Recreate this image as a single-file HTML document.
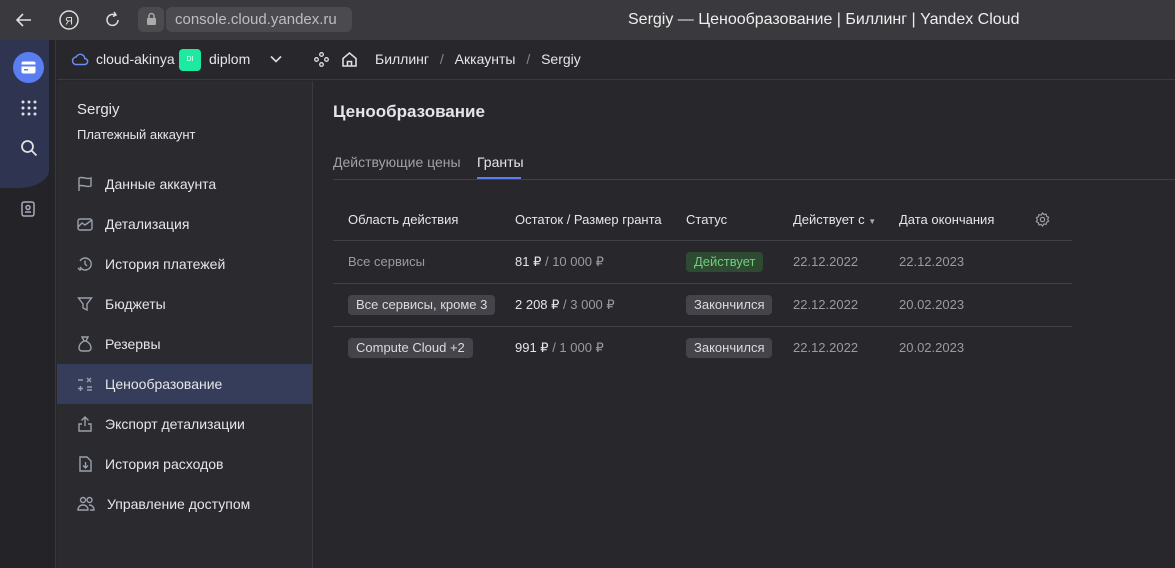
<!DOCTYPE html>
<html><head><meta charset="utf-8"><style>
*{margin:0;padding:0;box-sizing:border-box}
body{width:1175px;height:568px;overflow:hidden;background:#27272c;font-family:"Liberation Sans",sans-serif;color:#e6e6e8;position:relative}
.abs{position:absolute}
.bb{left:0;top:0;width:1175px;height:40px;background:#3a3a3e}
.url{left:166px;top:7px;width:186px;height:25px;border-radius:6px;background:#4a4a4f}
.rail{left:0;top:40px;width:56px;height:528px;background:#232328;border-right:1px solid #37373c}
.railb{left:0;top:40px;width:49px;height:148px;background:#2f3550;border-bottom-right-radius:30px 18px}
.top{left:57px;top:40px;width:1118px;height:40px;background:#27272c;border-bottom:1px solid #3a3a40}
.side{left:57px;top:81px;width:256px;height:487px;background:#2a2a2f;border-right:1px solid #3a3a40}
.mi{position:absolute;left:0;width:255px;height:40px;display:flex;align-items:center;font-size:14px;color:#e6e6e8}
.mi svg{margin-left:20px;margin-right:12px}
.th{position:absolute;top:212px;font-size:13px;color:#e6e6e8}
.hr{position:absolute;left:333px;width:739px;height:1px;background:#404046}
.c{position:absolute;font-size:13px}
.tag{position:absolute;height:20px;padding:0 8px;border-radius:4px;background:#44444a;font-size:13px;line-height:20px;color:#dcdcde}
.g{color:#9a9aa0}
</style></head><body>
<div class="abs bb"></div>
<svg class="abs" style="left:14px;top:10px" width="20" height="20" viewBox="0 0 20 20" fill="none" stroke="#ddd" stroke-width="1.6"><path d="M17 10H4M9 4L3 10l6 6"/></svg>
<svg class="abs" style="left:58px;top:9px" width="22" height="22" viewBox="0 0 22 22" fill="none" stroke="#ddd" stroke-width="1.5"><circle cx="11" cy="11" r="9"/><text x="7" y="15.5" font-size="11" fill="#ddd" stroke="none" font-family="Liberation Sans">Я</text></svg>
<svg class="abs" style="left:103px;top:10px" width="20" height="20" viewBox="0 0 20 20" fill="none" stroke="#ddd" stroke-width="1.5"><path d="M15 10a5.5 5.5 0 1 1-3-5M11 2l2 3-3 1.5"/></svg>
<div class="abs" style="left:138px;top:7px;width:26px;height:25px;border-radius:6px;background:#4a4a4f"></div>
<svg class="abs" style="left:146px;top:12px" width="11" height="14" viewBox="0 0 11 14" fill="#aaa"><rect x="1" y="6" width="9" height="7" rx="1"/><path d="M3 6V4a2.5 2.5 0 0 1 5 0v2" fill="none" stroke="#aaa" stroke-width="1.5"/></svg>
<div class="abs url"></div>
<div class="abs" style="left:175px;top:11px;font-size:15px;color:#bdbdc2">console.cloud.yandex.ru</div>
<div class="abs" style="left:628px;top:11px;font-size:16px;color:#eee">Sergiy — Ценообразование | Биллинг | Yandex Cloud</div>

<div class="abs rail"></div>
<div class="abs railb"></div>
<div class="abs" style="left:13px;top:52px;width:31px;height:31px;border-radius:50%;background:#5a7df0"></div>
<svg class="abs" style="left:21px;top:61px" width="15" height="13" viewBox="0 0 15 13"><rect x="0.5" y="0.5" width="14" height="12" rx="2" fill="#fff"/><rect x="0.5" y="3.5" width="14" height="2" fill="#5a7df0"/><rect x="3" y="8" width="4" height="1.5" fill="#5a7df0"/></svg>
<svg class="abs" style="left:21px;top:100px" width="16" height="16" viewBox="0 0 16 16" fill="#e0e0e4"><circle cx="2" cy="2" r="1.5"/><circle cx="8" cy="2" r="1.5"/><circle cx="14" cy="2" r="1.5"/><circle cx="2" cy="8" r="1.5"/><circle cx="8" cy="8" r="1.5"/><circle cx="14" cy="8" r="1.5"/><circle cx="2" cy="14" r="1.5"/><circle cx="8" cy="14" r="1.5"/><circle cx="14" cy="14" r="1.5"/></svg>
<svg class="abs" style="left:20px;top:139px" width="18" height="18" viewBox="0 0 18 18" fill="none" stroke="#e0e0e4" stroke-width="1.8"><circle cx="7.5" cy="7.5" r="5.5"/><path d="M11.5 11.5l5 5"/></svg>
<svg class="abs" style="left:21px;top:201px" width="14" height="16" viewBox="0 0 14 16" fill="none" stroke="#aab" stroke-width="1.5"><rect x="1" y="1" width="12" height="14" rx="2"/><circle cx="7" cy="6.5" r="2"/><path d="M4 11h6"/></svg>

<div class="abs top"></div>
<svg class="abs" style="left:71px;top:52px" width="18" height="14" viewBox="0 0 18 14" fill="none" stroke="#6a8ef5" stroke-width="1.5"><path d="M4.5 12.5h9a3 3 0 0 0 .3-6A4.5 4.5 0 0 0 5.2 5 3.8 3.8 0 0 0 4.5 12.5z"/></svg>
<div class="abs" style="left:96px;top:51px;font-size:14px">cloud-akinya</div>
<div class="abs" style="left:179px;top:49px;width:22px;height:22px;border-radius:4px;background:#1de9a0;font-size:7px;color:#fff;text-align:center;line-height:22px">DI</div>
<div class="abs" style="left:209px;top:51px;font-size:14px">diplom</div>
<svg class="abs" style="left:270px;top:55px" width="12" height="8" viewBox="0 0 12 8" fill="none" stroke="#ddd" stroke-width="1.6"><path d="M1 1.5l5 5 5-5"/></svg>
<svg class="abs" style="left:314px;top:52px" width="15" height="15" viewBox="0 0 15 15" fill="none" stroke="#ddd" stroke-width="1.3"><circle cx="7.5" cy="2.5" r="1.8"/><circle cx="2.5" cy="7.5" r="1.8"/><circle cx="12.5" cy="7.5" r="1.8"/><circle cx="7.5" cy="12.5" r="1.8"/></svg>
<svg class="abs" style="left:341px;top:51px" width="17" height="17" viewBox="0 0 17 17" fill="none" stroke="#ddd" stroke-width="1.6"><path d="M2 7.5L8.5 2 15 7.5V15H2z"/><path d="M6.5 15v-4.5h4V15"/></svg>
<div class="abs" style="left:375px;top:51px;font-size:14px">Биллинг <span style="color:#888;margin:0 7px">/</span> Аккаунты <span style="color:#888;margin:0 7px">/</span> Sergiy</div>

<div class="abs side"></div>
<div class="abs" style="left:77px;top:101px;font-size:15px">Sergiy</div>
<div class="abs" style="left:77px;top:127px;font-size:13px">Платежный аккаунт</div>
<div class="abs" style="left:57px;top:0">
<div class="mi" style="top:164px"><svg width="16" height="16" viewBox="0 0 16 16" fill="none" stroke="#9aa0ac" stroke-width="1.4"><path d="M2 15V2c4-2 7 2 12 0v8c-5 2-8-2-12 0"/></svg>Данные аккаунта</div>
<div class="mi" style="top:204px"><svg width="16" height="16" viewBox="0 0 16 16" fill="none" stroke="#9aa0ac" stroke-width="1.4"><rect x="1" y="3" width="14" height="11" rx="2"/><path d="M1 11l4-4 3 2 7-5"/></svg>Детализация</div>
<div class="mi" style="top:244px"><svg width="16" height="16" viewBox="0 0 16 16" fill="none" stroke="#9aa0ac" stroke-width="1.4"><path d="M3 11a6 6 0 1 0 0-6M8 4.5V8l2 2M1 12l2 2 2-2"/></svg>История платежей</div>
<div class="mi" style="top:284px"><svg width="16" height="16" viewBox="0 0 16 16" fill="none" stroke="#9aa0ac" stroke-width="1.4"><path d="M1.5 2h13L10 8v6l-4-2V8z"/></svg>Бюджеты</div>
<div class="mi" style="top:324px"><svg width="16" height="16" viewBox="0 0 16 16" fill="none" stroke="#9aa0ac" stroke-width="1.4"><path d="M5 1h6L9 5h-2zM7 5C3 7 2 10 2 12a3 3 0 0 0 3 3h6a3 3 0 0 0 3-3c0-2-1-5-5-7"/></svg>Резервы</div>
<div class="mi" style="top:364px;background:#353d5a"><svg width="16" height="16" viewBox="0 0 16 16" fill="none" stroke="#9aa0ac" stroke-width="1.4"><path d="M1 4h5M3.5 10v5M1 12.5h5M10 2l4 4M14 2l-4 4M10 11h5M10 14h5"/></svg>Ценообразование</div>
<div class="mi" style="top:404px"><svg width="16" height="16" viewBox="0 0 16 16" fill="none" stroke="#9aa0ac" stroke-width="1.4"><path d="M8 10V1M4.5 4.5L8 1l3.5 3.5M5 8H2v7h12V8h-3"/></svg>Экспорт детализации</div>
<div class="mi" style="top:444px"><svg width="16" height="16" viewBox="0 0 16 16" fill="none" stroke="#9aa0ac" stroke-width="1.4"><path d="M3 1h7l4 4v10H3zM8.5 6v6M6 9.5l2.5 2.5 2.5-2.5"/></svg>История расходов</div>
<div class="mi" style="top:484px"><svg width="18" height="16" viewBox="0 0 18 16" fill="none" stroke="#9aa0ac" stroke-width="1.4"><circle cx="6" cy="4" r="2.5"/><circle cx="12.5" cy="4" r="2.5"/><path d="M1 14c0-3 2-5 5-5s5 2 5 5zM12 9c3 0 5 2 5 5h-4"/></svg>Управление доступом</div>
</div>

<div class="abs" style="left:333px;top:102px;font-size:17px;font-weight:bold">Ценообразование</div>
<div class="abs" style="left:333px;top:154px;font-size:14px;color:#a0a0a6">Действующие цены</div>
<div class="abs" style="left:477px;top:154px;font-size:14px">Гранты</div>
<div class="abs" style="left:333px;top:179px;width:842px;height:1px;background:#404046"></div>
<div class="abs" style="left:477px;top:177px;width:44px;height:2px;background:#5a7df0"></div>

<div class="th" style="left:348px">Область действия</div>
<div class="th" style="left:515px">Остаток / Размер гранта</div>
<div class="th" style="left:686px">Статус</div>
<div class="th" style="left:793px">Действует с <span style="font-size:8px;color:#aaa">▼</span></div>
<div class="th" style="left:899px">Дата окончания</div>
<svg class="abs" style="left:1035px;top:212px" width="15" height="15" viewBox="0 0 16 16" fill="none" stroke="#9a9aa0" stroke-width="1.3"><circle cx="8" cy="8" r="2.3"/><path d="M8 1l1.5 1.8 2.3-.5.6 2.3 2.1 1-1 2.2 1 2.1-2.1 1-.6 2.3-2.3-.5L8 15l-1.5-1.8-2.3.5-.6-2.3-2.1-1 1-2.1-1-2.2 2.1-1 .6-2.3 2.3.5z"/></svg>
<div class="hr" style="top:240px"></div>
<div class="hr" style="top:283px"></div>
<div class="hr" style="top:326px"></div>

<div class="c g" style="left:348px;top:254px">Все сервисы</div>
<div class="c" style="left:515px;top:254px">81 ₽ <span class="g">/ 10 000 ₽</span></div>
<div class="tag" style="left:686px;top:252px;background:#2f4a33;color:#6fcf7a">Действует</div>
<div class="c g" style="left:793px;top:254px">22.12.2022</div>
<div class="c g" style="left:899px;top:254px">22.12.2023</div>

<div class="tag" style="left:348px;top:295px">Все сервисы, кроме 3</div>
<div class="c" style="left:515px;top:297px">2 208 ₽ <span class="g">/ 3 000 ₽</span></div>
<div class="tag" style="left:686px;top:295px">Закончился</div>
<div class="c g" style="left:793px;top:297px">22.12.2022</div>
<div class="c g" style="left:899px;top:297px">20.02.2023</div>

<div class="tag" style="left:348px;top:338px">Compute Cloud +2</div>
<div class="c" style="left:515px;top:340px">991 ₽ <span class="g">/ 1 000 ₽</span></div>
<div class="tag" style="left:686px;top:338px">Закончился</div>
<div class="c g" style="left:793px;top:340px">22.12.2022</div>
<div class="c g" style="left:899px;top:340px">20.02.2023</div>
</body></html>
